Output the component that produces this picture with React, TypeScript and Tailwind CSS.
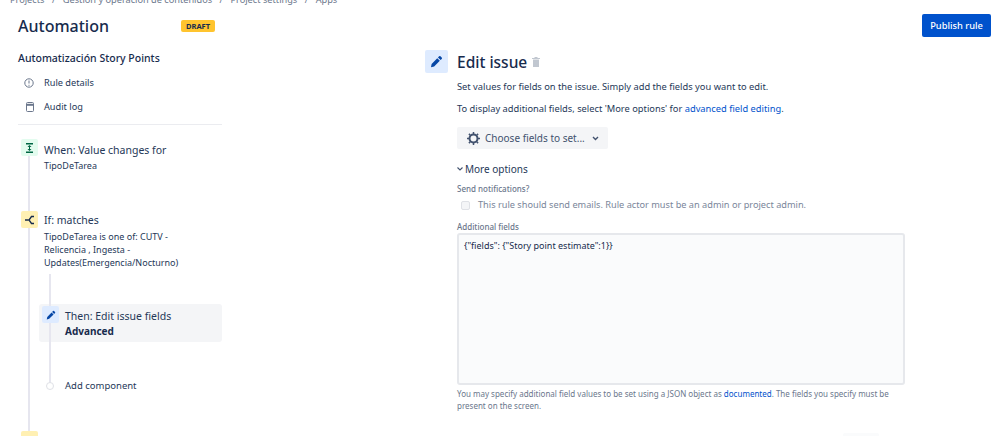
import React from "react";

const Pencil = ({ size = 12 }: { size?: number }) => (
  <svg width={size} height={size} viewBox="0 0 16 16" fill="#0747a6">
    <path d="M11.2 1.6a1.2 1.2 0 0 1 1.7 0l1.5 1.5a1.2 1.2 0 0 1 0 1.7l-1.4 1.4-3.2-3.2 1.4-1.4zM8.9 3.9l3.2 3.2-7 7-3.9.9.8-4 6.9-7.1z" />
  </svg>
);

const Step = ({ bg, children }: { bg: string; children: React.ReactNode }) => (
  <div className={`relative z-10 flex h-[17px] w-[17px] shrink-0 items-center justify-center rounded-[2px] ${bg}`}>{children}</div>
);

export default function App() {
  return (
    <div className="relative h-[436px] w-[998px] overflow-hidden bg-white font-['Noto_Sans',sans-serif] text-[#253858]">
      <div className="mt-[-7px] flex h-[14px] gap-[7.5px] pl-[10px] text-[9.2px] leading-[14px] whitespace-nowrap text-[#6b778c]">
        <span>Projects</span>
        <span>/</span>
        <span>Gestión y operación de contenidos</span>
        <span>/</span>
        <span>Project settings</span>
        <span>/</span>
        <span>Apps</span>
      </div>
      <div className="flex">
        <aside className="relative ml-[18px] w-[204px] shrink-0">
          <div className="flex items-center pt-[7px]">
            <h1 className="w-[90px] text-[16px] leading-[24px] font-medium text-[#172b4d]">Automation</h1>
            <span className="ml-[73px] rounded-[2px] bg-[#ffc42e] px-[5px] text-[7.5px] leading-[12px] font-bold text-[#172b4d]">DRAFT</span>
          </div>
          <h2 className="mt-[12px] text-[10.5px] leading-[16px] font-medium text-[#172b4d]">Automatización Story Points</h2>
          <div className="mt-[9px] flex h-[16px] items-center text-[9.2px] text-[#253858]">
            <svg className="mr-[10px] ml-[6px]" width="10" height="10" viewBox="0 0 10 10" fill="none" stroke="#6b778c">
              <circle cx="5" cy="5" r="4.2" />
              <path d="M5 2.5v3M5 6.8v1" />
            </svg>
            Rule details
          </div>
          <div className="mt-[8px] flex h-[16px] items-center text-[9.2px] text-[#253858]">
            <svg className="mr-[10px] ml-[8px]" width="8" height="10" viewBox="0 0 8 10" fill="none" stroke="#6b778c">
              <rect x="0.5" y="0.5" width="7" height="9" rx="1" />
              <path d="M1 2.8h6" strokeWidth="2" />
            </svg>
            Audit log
          </div>
          <div className="mt-[9px] h-px bg-[#ebecf0]" />

          <div className="relative mt-[14px]">
            <div className="absolute top-[10px] left-[10px] h-[300px] w-[2px] bg-[#e6e6ef]" />
            <div className="absolute top-[135px] left-[31px] h-[110px] w-[2px] bg-[#e6e6ef]" />

            <div className="ml-[3px] flex gap-[6px]">
              <Step bg="bg-[#e3fcef]">
                <svg width="9" height="10" viewBox="0 0 9 10" fill="#006644">
                  <path d="M1 0h7v1.4H1zM1 8.6h7V10H1zM4.5 2l2 2H5v2h1.5l-2 2-2-2H4V4H2.5z" />
                </svg>
              </Step>
              <div className="pt-[5px]">
                <div className="text-[10.5px] leading-[12px] text-[#253858]">When: Value changes for</div>
                <div className="mt-[4px] text-[9px] leading-[12px]">TipoDeTarea</div>
              </div>
            </div>

            <div className="mt-[39px] ml-[3px] flex gap-[6px]">
              <Step bg="bg-[#fff0b3]">
                <svg width="10" height="10" viewBox="0 0 10 10" fill="none" stroke="#172b4d" strokeWidth="1.3">
                  <path d="M0 5h3.5M9 1.5H6.5L4 5l2.5 3.5H9" />
                </svg>
              </Step>
              <div className="pt-[3px]">
                <div className="text-[10.5px] leading-[12px]">If: matches</div>
                <div className="mt-[4px] w-[160px] text-[9px] leading-[13px]">
                  TipoDeTarea is one of: CUTV - Relicencia , Ingesta - Updates(Emergencia/Nocturno)
                </div>
              </div>
            </div>

            <div className="mt-[35px] ml-[21px] flex h-[38px] gap-[6px] rounded-[3px] bg-[#f4f5f7] pt-[2px] pl-[3px]">
              <Step bg="bg-[#deebff]">
                <Pencil size={10} />
              </Step>
              <div className="pt-[3px]">
                <div className="text-[10.5px] leading-[15px]">Then: Edit issue fields</div>
                <div className="text-[10px] leading-[15px] font-bold text-[#172b4d]">Advanced</div>
              </div>
            </div>

            <div className="relative mt-[36px] ml-[21px] flex h-[16px] items-center">
              <span className="z-10 ml-[7px] h-[8px] w-[8px] rounded-full border-[1.5px] border-[#dfe1e6] bg-white" />
              <span className="ml-[11px] text-[9.5px]">Add component</span>
            </div>

            <div className="relative mt-[37px] ml-[3px]">
              <Step bg="bg-[#fff0b3]">
                <span />
              </Step>
            </div>
          </div>
        </aside>

        <main className="ml-[203px] w-[480px] shrink-0 pt-[43px]">
          <div className="flex items-center">
            <div className="flex h-[23px] w-[23px] items-center justify-center rounded-[2px] bg-[#deebff]">
              <Pencil size={13} />
            </div>
            <h2 className="ml-[9px] text-[15.5px] leading-[22px] font-medium text-[#172b4d]">Edit issue</h2>
            <svg className="mt-[1px] ml-[5px]" width="8" height="10" viewBox="0 0 8 10" fill="#c1c7d0">
              <path d="M0 1h8v1H0zM2.5 0h3v1h-3zM1 2.5h6V10H1z" />
            </svg>
          </div>
          <div className="ml-[32px]">
            <p className="mt-[6px] text-[9.3px] leading-[16px] text-[#253858]">Set values for fields on the issue. Simply add the fields you want to edit.</p>
            <p className="mt-[6px] text-[9.3px] leading-[16px] text-[#253858]">
              To display additional fields, select 'More options' for <span className="text-[#0052cc]">advanced field editing</span>.
            </p>
            <button className="mt-[10px] flex h-[22px] w-[151px] items-center rounded-[2px] bg-[#f4f5f7] pl-[10px] text-[10px] text-[#42526e]">
              <svg width="13" height="13" viewBox="0 0 13 13" fill="none" stroke="#42526e" strokeWidth="2">
                <circle cx="6.5" cy="6.5" r="4" />
                <path strokeWidth="1.5" d="M6.5 0v2M6.5 11v2M0 6.5h2M11 6.5h2M1.9 1.9l1.4 1.4M9.7 9.7l1.4 1.4M1.9 11.1l1.4-1.4M9.7 3.3l1.4-1.4" />
              </svg>
              <span className="ml-[5px]">Choose fields to set...</span>
              <svg className="ml-[7px]" width="7" height="5" viewBox="0 0 7 5" fill="none" stroke="#42526e" strokeWidth="1.4">
                <path d="M1 1l2.5 2.5L6 1" />
              </svg>
            </button>
            <div className="mt-[12px] flex items-center text-[10px] leading-[16px] text-[#253858]">
              <svg className="mr-[2px]" width="6" height="4" viewBox="0 0 6 4" fill="none" stroke="#42526e" strokeWidth="1.1">
                <path d="M0.5 0.5L3 3l2.5-2.5" />
              </svg>
              More options
            </div>
            <div className="mt-[6px] text-[8px] leading-[12px] font-medium text-[#6b778c]">Send notifications?</div>
            <div className="mt-[2px] flex h-[16px] items-center text-[9.2px] text-[#7a869a]">
              <span className="mr-[8px] ml-[4px] h-[9px] w-[9px] rounded-[2px] border border-[#dfe1e6] bg-[#f4f5f7]" />
              This rule should send emails. Rule actor must be an admin or project admin.
            </div>
            <div className="mt-[8px] text-[8px] leading-[12px] font-medium text-[#6b778c]">Additional fields</div>
            <div className="h-[152px] w-[448px] rounded-[3px] border-2 border-[#e6e8ec] bg-[#fafbfc] px-[5px] py-[4px] text-[9px] leading-[14px] text-[#172b4d]">
              {'{"fields": {"Story point estimate":1}}'}
            </div>
            <p className="mt-[3px] w-[448px] text-[8px] leading-[12px] text-[#6b778c]">
              You may specify additional field values to be set using a JSON object as <span className="text-[#0052cc]">documented</span>. The fields you specify must be present on the screen.
            </p>
            <div className="mt-[21px] ml-[386px] h-[10px] w-[36px] rounded-[2px] bg-[#fafbfc]" />
          </div>
        </main>

        <button className="mt-[7px] ml-[17px] h-[23px] w-[69px] rounded-[2px] bg-[#0052cc] text-[9.3px] font-medium text-white">Publish rule</button>
      </div>
    </div>
  );
}
